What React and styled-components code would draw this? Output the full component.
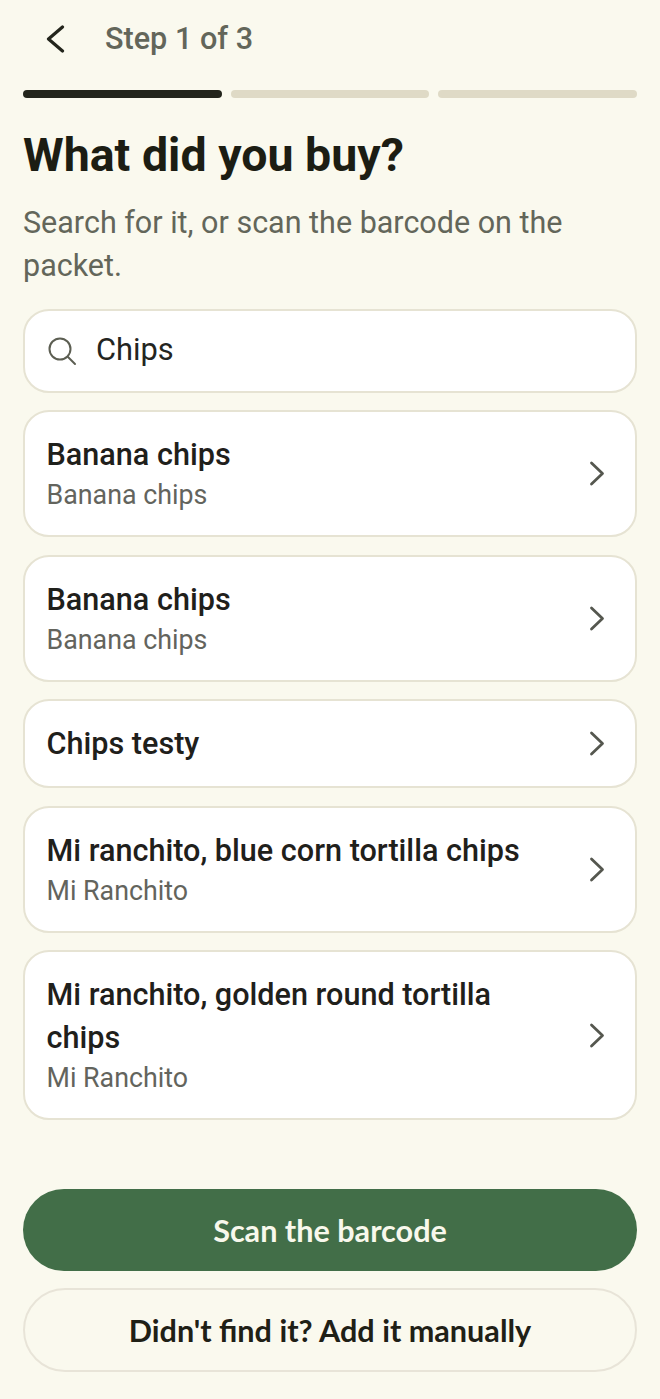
import styled, { createGlobalStyle } from "styled-components";

const GlobalStyle = createGlobalStyle`
  html, body {
    margin: 0;
    padding: 0;
    background: #faf9ee;
  }
  * {
    box-sizing: border-box;
  }
`;

const results = [
  { id: 1, name: "Banana chips", brand: "Banana chips" },
  { id: 2, name: "Banana chips", brand: "Banana chips" },
  { id: 3, name: "Chips testy" },
  { id: 4, name: "Mi ranchito, blue corn tortilla chips", brand: "Mi Ranchito" },
  { id: 5, name: "Mi ranchito, golden round tortilla chips", brand: "Mi Ranchito" },
];

const BackChevron = () => (
  <svg width="19" height="28" viewBox="0 0 19 28" fill="none">
    <path
      d="M16.5 2 L2.5 14 L16.5 26"
      stroke="currentColor"
      strokeWidth="3.2"
      strokeLinecap="round"
      strokeLinejoin="round"
    />
  </svg>
);

const RightChevron = () => (
  <svg width="16" height="25" viewBox="0 0 16 25" fill="none">
    <path
      d="M2.5 2 L13.5 12.5 L2.5 23"
      stroke="#55574f"
      strokeWidth="2.8"
      strokeLinecap="round"
      strokeLinejoin="round"
    />
  </svg>
);

const App = () => {
  return (
    <>
      <GlobalStyle />
      <Page>
        <Header>
          <BackIcon>
            <BackChevron />
          </BackIcon>
          <StepText>Step 1 of 3</StepText>
        </Header>
        <Progress>
          <ProgressBar $active />
          <ProgressBar />
          <ProgressBar />
        </Progress>
        <Title>What did you buy?</Title>
        <Subtitle>Search for it, or scan the barcode on the packet.</Subtitle>
        <SearchBox>
          <svg width="30" height="30" viewBox="0 0 30 30" fill="none">
            <circle cx="13" cy="13" r="10.5" stroke="#5c5e52" strokeWidth="2" />
            <path d="M21 21 L28 28" stroke="#5c5e52" strokeWidth="2" strokeLinecap="round" />
          </svg>
          <SearchText>Chips</SearchText>
        </SearchBox>
        <List>
          {results.map((item) => (
            <Card key={item.id}>
              <CardText>
                <CardName>{item.name}</CardName>
                {item.brand && <CardBrand>{item.brand}</CardBrand>}
              </CardText>
              <RightChevron />
            </Card>
          ))}
        </List>
        <Actions>
          <PrimaryBtn>Scan the barcode</PrimaryBtn>
          <SecondaryBtn>Didn't find it? Add it manually</SecondaryBtn>
        </Actions>
      </Page>
    </>
  );
};

const Page = styled.div`
  width: 660px;
  height: 1399px;
  padding: 0 23px;
  background: #faf9ee;
  font-family: "Roboto", sans-serif;
  overflow: hidden;
`;
const Header = styled.div`
  height: 90px;
  display: flex;
  align-items: center;
  padding: 0 0 13px 23px;
`;
const BackIcon = styled.div`
  width: 19px;
  height: 28px;
  margin-right: 40px;
  color: #23251c;
`;
const StepText = styled.div`
  font-size: 30.6px;
  font-weight: 500;
  color: #63665a;
`;
const Progress = styled.div`
  display: flex;
  gap: 9px;
`;
const ProgressBar = styled.div`
  flex: 1;
  height: 8px;
  border-radius: 4px;
  background: ${(p) => (p.$active ? "#23251c" : "#dfdac6")};
`;
const Title = styled.h1`
  margin: 24px 0 0;
  font-size: 46.5px;
  line-height: 66px;
  font-weight: 700;
  color: #1c1d13;
`;
const Subtitle = styled.p`
  margin: 13px 0 0;
  font-size: 30.5px;
  line-height: 43px;
  font-weight: 400;
  color: #63665a;
`;
const SearchBox = styled.div`
  height: 84px;
  margin-top: 22px;
  display: flex;
  align-items: center;
  gap: 19px;
  padding: 0 22px;
  background: #fff;
  border: 2px solid #e6e3d3;
  border-radius: 26px;
`;
const SearchText = styled.span`
  font-size: 30.8px;
  color: #24251f;
  margin-bottom: 3px;
`;
const List = styled.div`
  display: flex;
  flex-direction: column;
  gap: 17.5px;
  margin-top: 17px;
`;
const Card = styled.div`
  display: flex;
  align-items: center;
  justify-content: space-between;
  padding: 21px 30px 21px 21.5px;
  background: #fff;
  border: 2px solid #e6e3d3;
  border-radius: 26px;
`;
const CardText = styled.div`
  width: 490px;
`;
const CardName = styled.div`
  font-size: 30.6px;
  line-height: 43px;
  font-weight: 500;
  color: #1f201b;
`;
const CardBrand = styled.div`
  font-size: 26.8px;
  line-height: 38px;
  color: #63645d;
`;
const Actions = styled.div`
  display: flex;
  flex-direction: column;
  gap: 17px;
  margin-top: 69px;
`;
const PrimaryBtn = styled.button`
  height: 82px;
  border: none;
  border-radius: 41px;
  background: #426e48;
  color: #f8f8ec;
  font-family: "Lato", sans-serif;
  font-size: 30.6px;
  font-weight: 700;
`;
const SecondaryBtn = styled.button`
  height: 84px;
  border: 2px solid #e8e4d8;
  border-radius: 42px;
  background: transparent;
  color: #1f2016;
  font-family: "Lato", sans-serif;
  font-size: 30.6px;
  font-weight: 700;
`;

export default App;
